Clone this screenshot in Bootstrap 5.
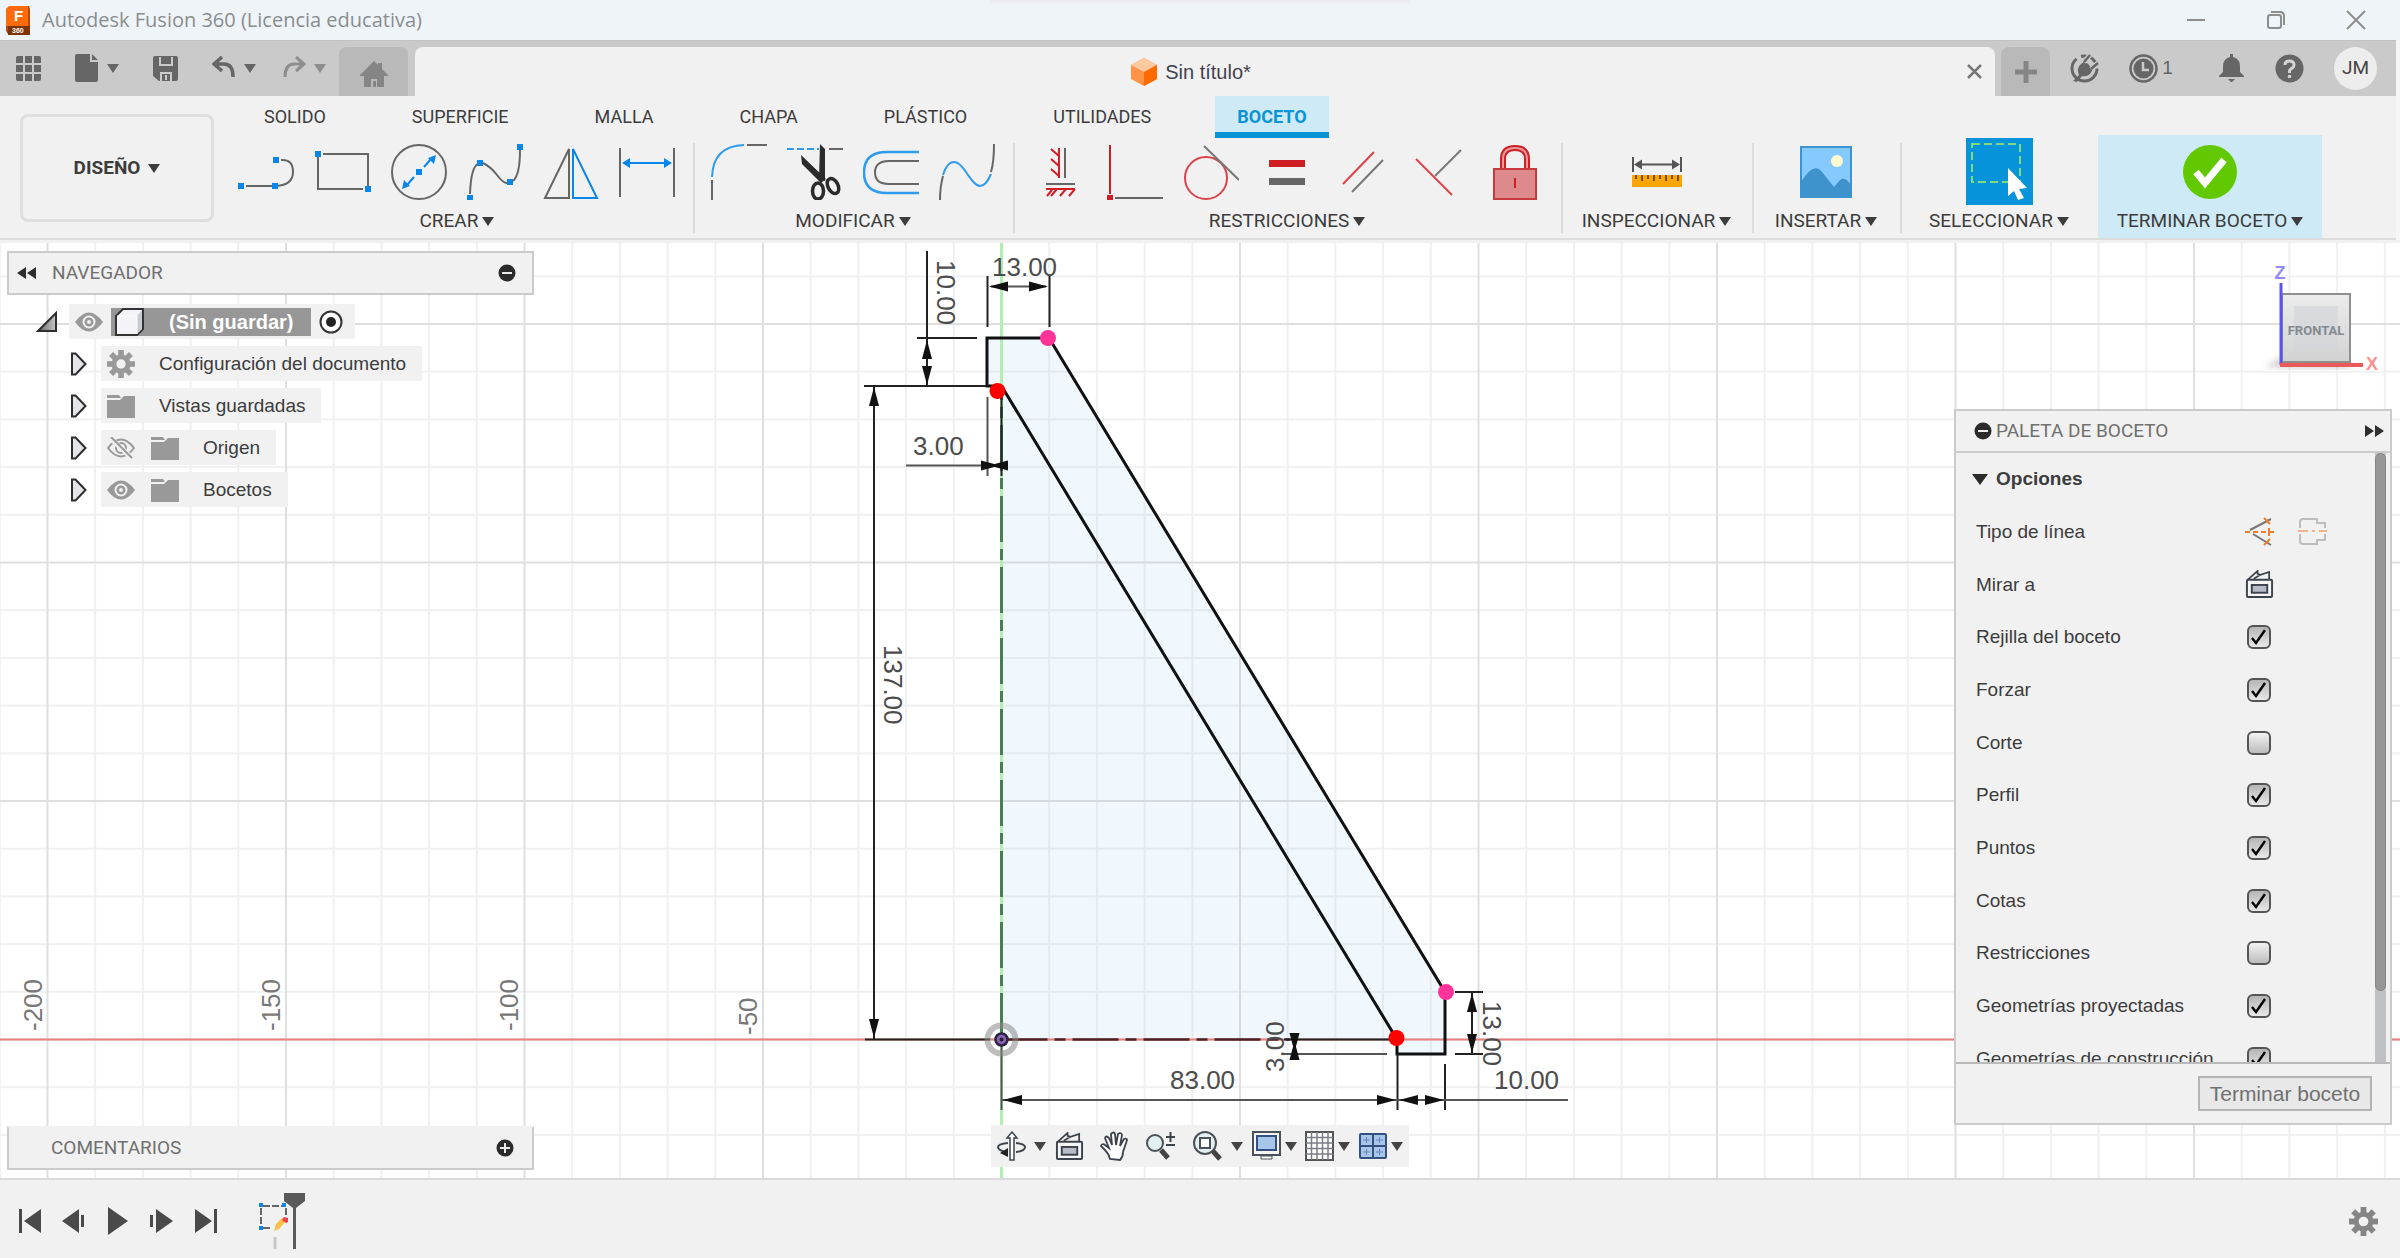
<!DOCTYPE html>
<html lang="es">
<head>
<meta charset="utf-8">
<meta name="viewport" content="width=device-width, initial-scale=1">
<title>Autodesk Fusion 360 (Licencia educativa)</title>
<link href="https://cdn.jsdelivr.net/npm/bootstrap@5.3.0/dist/css/bootstrap.min.css" rel="stylesheet">
<style>
:root{--ui:#f1f1f1;--ink:#3c3c3c;--icon:#666}
body{font-family:"Liberation Sans",Arial,sans-serif;font-size:19px;line-height:24px;color:var(--ink);background:#f6f6f6}
button{border:0;background:none;padding:0;color:inherit;font:inherit}
svg{display:block;flex:none}
.caret{display:inline-block;flex:none;border:6px solid transparent;border-top:9px solid currentColor;border-bottom:0}
.titlebar{height:40px;background:linear-gradient(#e9ebf0,#f0f2f7) center top/420px 5px no-repeat,#eff4f8;color:#8a8d90;font-family:"Open Sans","Noto Sans",sans-serif;font-size:20px;padding:0 34px 0 5px}
.titlebar .brand{gap:12px}
.win-ctl{gap:60px}
.appbar{height:56px;background:#cacaca;margin-right:4px;color:var(--icon);padding-top:6px;border-top:1px solid #c2c2c2}
.qat{width:339px;height:42px;padding:0 13px 0 16px}
.home-tab{width:69px;height:49px;background:#b9b9b9;border-radius:7px 7px 0 0;margin-right:7px;color:#858585;padding-top:5px}
.doc-tab{background:var(--ui);height:49px;border-radius:8px 8px 0 0;font-size:20px;padding-right:13px;margin-right:6px;color:#434350}
.add-tab{width:49px;height:49px;background:#b9b9b9;border-radius:8px 8px 0 0;color:#858585}
.status{width:346px;height:42px;padding:0 19px 0 20px}
.avatar{width:43px;height:43px;border-radius:50%;background:#ededed;color:#444;font-family:Roboto,sans-serif;font-size:19px}
.ribbon{background:var(--ui);border-bottom:2px solid #dcdcdc;height:144px;font-family:Roboto,sans-serif;margin-right:4px}
.workspace-btn{width:194px;height:108px;border:3px solid #dfdfdf;border-radius:8px;margin:18px 7px 0 20px;font-weight:700}
.rib-tabs{height:39px;gap:42px;padding-left:21px;font-size:18px}
.rib-tabs button{height:42px;padding:0 22px;border-bottom:6px solid transparent;padding-top:5px;line-height:24px}
.rib-tabs button.active{background:#cdeaf6;border-color:#0a94d6;color:#0a94d6;font-weight:700}
.rib-group{padding:3px 18px 0;position:relative;height:103px}
.rib-group .tools{height:67px;gap:20px;margin-bottom:4px}
.rib-group .tools>button{width:56px;height:56px;display:flex;align-items:center;justify-content:center}
.rib-group + .rib-group:not(.finish)::before{content:"";position:absolute;left:0;top:8px;height:90px;width:2px;background:#dcdcdc}
.g-inspect{width:191px}.g-insert{width:148px}.g-select{width:198px}
.finish{width:224px;background:#cdeaf6}
.stage{background:#fff;border-top:3px solid var(--ui);min-height:0}
.drawing{position:absolute;inset:0;width:100%;height:100%}
.panel-bar{width:527px;height:44px;background:var(--ui);border:2px solid #cbcbcb;color:#707070;font-family:Roboto,sans-serif}
.browser{padding:8px 0 0 7px}
.tree{margin:9px 0 0 29px}
.tree .node{height:35px;margin-bottom:7px}
.tree .kids{margin-left:34px}
.tree .kids .node{gap:14px}
.chip{background:var(--ui);height:35px;padding:0 16px 0 6px}
.root-name{background:#979797;height:28px;width:200px;color:#fff;font-size:20px;font-weight:700;padding-left:4px;gap:25px}
.palette{width:438px;background:var(--ui);border:2px solid #cbcbcb;margin-right:8px}
.palette-head{height:42px;border-bottom:2px solid #cbcbcb;padding:0 6px 0 18px;color:#707070;font-family:Roboto,sans-serif}
.palette-body{height:609px;overflow:hidden}
.opts{display:grid;grid-auto-rows:1fr;height:632px;margin:0}
.opts>*{display:flex;align-items:center;padding-left:20px}
.opts .opt-label{width:269px}
.opts input{appearance:none;width:24px;height:24px;margin:0 0 0 2px;border:2px solid #555;border-radius:6px;background:linear-gradient(#f3f3f3,#bcbcbc)}
.opts input:checked{background:url("data:image/svg+xml,%3Csvg xmlns='http://www.w3.org/2000/svg' viewBox='0 0 20 20'%3E%3Cpath d='M3 11l4 5L16 3' fill='none' stroke='%23000' stroke-width='2.4'/%3E%3C/svg%3E"),linear-gradient(#b5b5b5,#e8e8e8)}
.track{width:11px;background:#bfc1c4;margin-right:4px}
.thumb{height:538px;background:#979797;border:1px solid #858585;border-radius:6px}
.palette-foot{height:61px;border-top:2px solid #b9b9b9;padding:0 18px 0 0}
.finish-btn{width:174px;height:35px;border:2px solid #b4b4b4;background:#e8e8e8;font-size:21px;color:#707070}
.bottom-row{display:grid;grid-template-columns:1fr auto 1fr;height:53px}
.navtools{height:42px;width:418px;background:rgba(240,240,240,.96);padding:0 6px 0 6px;color:#444}
.comments{border-top-color:var(--ui);padding:0 18px 0 42px;margin:1px 0 0 7px}
.timeline{height:80px;background:var(--ui);border-top:2px solid #dadada;color:#4a4a4a;padding:4px 22px 0 18px}
.dimtxt{font:26px "Liberation Sans",Arial,sans-serif;fill:#4c4c4c}
</style>
<script src="https://cdn.jsdelivr.net/npm/bootstrap@5.3.0/dist/js/bootstrap.bundle.min.js"></script>
</head>
<body class="d-flex flex-column vh-100 overflow-hidden">
<svg width="0" height="0" class="position-absolute" aria-hidden="true">
  <symbol id="eye" viewBox="0 0 28 20"><path d="M0 10Q14-9 28 10Q14 29 0 10z" fill="#999"/><circle cx="14" cy="10" r="5.5" fill="none" stroke="#f1f1f1" stroke-width="2"/><circle cx="14" cy="10" r="2" fill="#f1f1f1"/></symbol>
  <symbol id="folder" viewBox="0 0 28 24"><path d="M0 1h12l2 3H0zM0 6h13l4-4h11v22H0z" fill="#999"/></symbol>
  <symbol id="arrow" viewBox="0 0 17 24"><path d="M2 1.500h3.500L15.500 12 5.500 22.500H2z" fill="#e4e4ea" stroke="#2e2e2e" stroke-width="2"/></symbol>
  <symbol id="gear" viewBox="-14 -14 28 28"><g fill="currentColor"><circle r="9.500"/><g id="t"><rect x="-2.800" y="-14" width="5.600" height="28"/><rect x="-14" y="-2.800" width="28" height="5.600"/></g><use href="#t" transform="rotate(45)"/></g><circle r="4.700" fill="#f1f1f1"/></symbol>
  <symbol id="lookat" viewBox="0 0 30 30"><path d="M3 10l10-9v3l3 1 9-3v8M9 9l7-4" fill="none" stroke="#3d434c" stroke-width="1.800"/><rect x="2" y="10" width="26" height="18" rx="1" fill="#f6f6f6" stroke="#3d434c" stroke-width="2"/><rect x="7" y="15.500" width="16" height="8" fill="#b9bcc6" stroke="#3d434c" stroke-width="2"/></symbol>
</svg>

<header class="titlebar d-flex align-items-center justify-content-between">
  <div class="brand d-flex align-items-center">
    <svg width="25" height="29" viewBox="0 0 25 29"><path d="M1 3l4-3h19l1 3v25H3l-2-3z" fill="#b24a10"/><path d="M1 3l3-3h19v20H1z" fill="#ff6b0b"/><path d="M3 20h22v9H3z" fill="#7e3205"/><text x="9" y="15" font-size="15" font-weight="700" fill="#fff" font-family="Liberation Sans">F</text><text x="7" y="27" font-size="7" font-weight="700" fill="#fff" font-family="Liberation Sans">360</text></svg>
    <span>Autodesk Fusion 360 (Licencia educativa)</span>
  </div>
  <div class="win-ctl d-flex align-items-center">
    <button aria-label="Minimizar"><svg width="20" height="20"><path d="M1 10h18" stroke="#8d8d8d" stroke-width="2"/></svg></button>
    <button aria-label="Restaurar"><svg width="20" height="20" fill="none" stroke="#8d8d8d" stroke-width="2"><rect x="2" y="5" width="13" height="13" rx="2"/><path d="M5 2h9q4 0 4 4v9"/></svg></button>
    <button aria-label="Cerrar"><svg width="20" height="20"><path d="M1 1l18 18M19 1L1 19" stroke="#8d8d8d" stroke-width="2"/></svg></button>
  </div>
</header>

<div class="appbar d-flex flex-none align-items-start">
  <div class="qat d-flex align-items-center justify-content-between">
    <button aria-label="Panel de datos"><svg width="25" height="25" fill="currentColor"><path d="M0 2q0-2 2-2h5v7H0zM9 0h7v7H9zM18 0h5q2 0 2 2v5h-7zM0 9h7v7H0zM9 9h7v7H9zM18 9h7v7h-7zM0 18h7v7H2q-2 0-2-2zM9 18h7v7H9zM18 18h7v5q0 2-2 2h-5z"/></svg></button>
    <button class="d-flex align-items-center ms-3" aria-label="Archivo"><svg width="24" height="28" fill="currentColor"><path d="M2 0h13v8h8v18q0 2-2 2H2q-2 0-2-2V2q0-2 2-2zM17 0l6 6h-6z"/></svg><span class="caret ms-2 me-3"></span></button>
    <button aria-label="Guardar"><svg width="25" height="25"><path d="M2 0h21q2 0 2 2v21q0 2-2 2H6l-6-5V2q0-2 2-2z" fill="currentColor"/><path d="M7 1v8h12V1M8 25v-8h10v8M13 19v5" fill="none" stroke="#cacaca" stroke-width="2"/></svg></button>
    <button class="d-flex align-items-center ms-3" aria-label="Deshacer"><svg width="24" height="24" fill="none" stroke="currentColor" stroke-width="3.500"><path d="M10 1L2 8l8 7M2 8h10q9 0 9 13"/></svg><span class="caret ms-2"></span></button>
    <button class="d-flex align-items-center ms-2" aria-label="Rehacer" style="color:#8e8e8e"><svg width="24" height="24" fill="none" stroke="currentColor" stroke-width="3"><path d="M14 1l8 7-8 7M22 8H12Q3 8 3 21"/></svg><span class="caret ms-2"></span></button>
  </div>
  <button class="home-tab d-flex align-items-center justify-content-center" aria-label="Inicio"><svg width="28" height="26" fill="currentColor"><path d="M14 0l4 4V2h4v6l6 6v1h-4v11h-7v-8h-6v8H4V15H0v-1zM13 20h3v6h-3z"/></svg></button>
  <div class="doc-tab flex-grow-1 d-flex align-items-center">
    <div class="flex-grow-1 d-flex align-items-center justify-content-center gap-2">
      <svg width="26" height="28"><path d="M13 0l13 7v14l-13 7L0 21V7z" fill="#ff9346"/><path d="M13 0l13 7-13 7L0 7z" fill="#ffc9a0"/><path d="M26 7v14l-13 7V14z" fill="#ff6a00"/></svg>
      <span>Sin título*</span>
    </div>
    <button aria-label="Cerrar documento"><svg width="15" height="15"><path d="M1 1l13 13M14 1L1 14" stroke="#777" stroke-width="2.500"/></svg></button>
  </div>
  <button class="add-tab d-flex align-items-center justify-content-center" aria-label="Nuevo diseño"><svg width="24" height="24"><path d="M12 1v22M1 12h22" stroke="currentColor" stroke-width="5"/></svg></button>
  <div class="status d-flex align-items-center justify-content-between">
    <button aria-label="Extensiones"><svg width="29" height="29"><circle cx="14.500" cy="14.500" r="12.500" fill="none" stroke="currentColor" stroke-width="3" stroke-dasharray="50 5 20 4"/><path d="M3 27l6-6q-3-7 2-11l4-3 8 8-3 5q-4 3-8 2l-5 6z" fill="currentColor"/><path d="M14 8l6-7M21 15l7-6" stroke="#cacaca" stroke-width="5"/><path d="M14 8l6-7M21 15l7-6" stroke="currentColor" stroke-width="2.500"/></svg></button>
    <button class="d-flex align-items-center gap-1 ms-2" aria-label="Estado de trabajos 1"><svg width="29" height="29"><circle cx="14.500" cy="14.500" r="13" fill="none" stroke="currentColor" stroke-width="2.500"/><circle cx="14.500" cy="14.500" r="10" fill="currentColor"/><path d="M14 8v8h6" fill="none" stroke="#cacaca" stroke-width="2.500"/></svg><span>1</span></button>
    <button class="ms-4" aria-label="Notificaciones"><svg width="25" height="28" fill="currentColor"><path d="M11 0h3v3q7 2 7 9v6l4 4v1H0v-1l4-4v-6q0-7 7-9zM9 25h7l-3 3h-1z"/></svg></button>
    <button class="ms-2" aria-label="Ayuda"><svg width="29" height="29"><circle cx="14.500" cy="14.500" r="14" fill="currentColor"/><path d="M10 11q0-4 4.500-4t4.500 4q0 2-2.500 3.500T14.500 18v1" fill="none" stroke="#d4d4d4" stroke-width="3"/><circle cx="14.500" cy="22.500" r="1.800" fill="#d4d4d4"/></svg></button>
    <button class="avatar ms-2">JM</button>
  </div>
</div>

<div class="ribbon d-flex flex-none">
  <button class="workspace-btn d-flex align-items-center justify-content-center gap-2">DISEÑO <span class="caret"></span></button>
  <div class="flex-grow-1">
    <nav class="rib-tabs d-flex align-items-start"><button>SOLIDO</button><button>SUPERFICIE</button><button>MALLA</button><button>CHAPA</button><button>PLÁSTICO</button><button>UTILIDADES</button><button class="active">BOCETO</button></nav>
    <div class="d-flex">
      <section class="rib-group">
        <div class="tools d-flex align-items-center">
          <button aria-label="Línea"><svg width="58" height="56" fill="none" stroke="#666" stroke-width="2"><path d="M8 42h26M38 42q17-1 17-14T43 16"/><path d="M0 39h6v6H0zM34 39h6v6h-6zM35 13h6v6h-6z" fill="#0a86e8" stroke="none"/></svg></button>
          <button aria-label="Rectángulo"><svg width="56" height="56" fill="none" stroke="#666" stroke-width="2"><path d="M8 10h45v33M48 45H3V13"/><path d="M0 7h6v6H0zM50 42h6v6h-6z" fill="#0a86e8" stroke="none"/></svg></button>
          <button aria-label="Círculo"><svg width="56" height="56"><circle cx="28" cy="28" r="27" fill="none" stroke="#666" stroke-width="2"/><path d="M33 23l7-8M23 33l-7 8" stroke="#0a86e8" stroke-width="2"/><path d="M25 25h6v6h-6zM45 11l-2 9-6-6zM11 45l2-9 6 6z" fill="#0a86e8"/></svg></button>
          <button aria-label="Spline"><svg width="56" height="56" fill="none" stroke="#666" stroke-width="2"><path d="M3 50Q4 23 11 20M16 19q8 4 14 12t10 8M46 37q7-6 7-31"/><path d="M0 51h6v6H0zM10 16h6v6h-6zM40 35h6v6h-6zM50 0h6v6h-6z" fill="#0a86e8" stroke="none"/></svg></button>
          <button aria-label="Simetría"><svg width="56" height="56" fill="none" stroke-width="2"><path d="M26 5v49H2z" stroke="#666"/><path d="M30 5v49h24z" stroke="#0a86e8"/></svg></button>
          <button aria-label="Cota"><svg width="56" height="56"><path d="M1 4v49M55 4v49" stroke="#666" stroke-width="2"/><path d="M6 19h44" stroke="#0a86e8" stroke-width="2"/><path d="M3 19l8-5v10zM53 19l-8-5v10z" fill="#0a86e8"/></svg></button>
        </div>
        <button class="d-flex w-100 align-items-center justify-content-center gap-1">CREAR <span class="caret"></span></button>
      </section>
      <section class="rib-group">
        <div class="tools d-flex align-items-center">
          <button aria-label="Empalme"><svg width="56" height="56" fill="none" stroke-width="2"><path d="M36 1h20M1 56V36" stroke="#666"/><path d="M1 33Q2 2 33 1" stroke="#2f9bea"/></svg></button>
          <button aria-label="Recortar"><svg width="56" height="56"><path d="M0 5h32" stroke="#2f9bea" stroke-width="2" stroke-dasharray="7 3"/><path d="M42 5h14" stroke="#666" stroke-width="2"/><path d="M33 0l5 5v32l-6-2zM14 11l25 24-5 4-19-19z" fill="#2b2b2b"/><ellipse cx="31" cy="47" rx="5.500" ry="8" fill="none" stroke="#2b2b2b" stroke-width="3.500"/><ellipse cx="46" cy="42" rx="5" ry="8" transform="rotate(-28 46 42)" fill="none" stroke="#2b2b2b" stroke-width="3.500"/></svg></button>
          <button aria-label="Desfase"><svg width="56" height="56" fill="none"><path d="M56 8H24Q1 8 1 28.500T24 49h32" stroke="#2f9bea" stroke-width="2.500"/><path d="M56 17H26Q12 17 12 28.500T26 40h30" stroke="#666" stroke-width="2"/></svg></button>
          <button aria-label="Curva"><svg width="56" height="56" fill="none" stroke-width="2"><path d="M1 56q0-13 3-24M52 28q3-10 3-28" stroke="#666"/><path d="M4 31q4-13 11-13c10 0 17 24 26 24q6 0 11-12" stroke="#2f9bea"/></svg></button>
        </div>
        <button class="d-flex w-100 align-items-center justify-content-center gap-1">MODIFICAR <span class="caret"></span></button>
      </section>
      <section class="rib-group">
        <div class="tools d-flex align-items-center">
          <button aria-label="Horizontal/Vertical"><svg width="56" height="56" fill="none" stroke="#cf1f25" stroke-width="2"><path d="M28 4v30M28 12l-8-7M28 22l-8-7M28 32l-8-7M15 45h29M20 52l6-7M29 52l6-7M38 52l6-7M16 52l5-6"/><path d="M34 4v30M15 40h29" stroke="#666"/></svg></button>
          <button aria-label="Coincidente"><svg width="56" height="56"><path d="M3 1v49" stroke="#cf1f25" stroke-width="2"/><path d="M8 54h48" stroke="#666" stroke-width="2"/><path d="M0 51h6v5H0z" fill="#cf1f25"/></svg></button>
          <button aria-label="Tangente"><svg width="56" height="56" fill="none" stroke-width="2"><circle cx="23" cy="34" r="21" stroke="#d9444a"/><path d="M21 2l35 34" stroke="#777"/></svg></button>
          <button aria-label="Igual"><svg width="56" height="56"><path d="M10 16h36v7H10z" fill="#cf1f25"/><path d="M10 34h36v7H10z" fill="#666"/></svg></button>
          <button aria-label="Paralela"><svg width="56" height="56" stroke-width="2"><path d="M8 40L39 8" stroke="#d9444a"/><path d="M17 48l31-32" stroke="#777"/></svg></button>
          <button aria-label="Perpendicular"><svg width="56" height="56" stroke-width="2"><path d="M5 15l36 36" stroke="#d9444a"/><path d="M24 32L50 6" stroke="#777"/></svg></button>
          <button aria-label="Fijar"><svg width="56" height="56"><path d="M16 25V15q0-11 12-11t12 11v10" fill="none" stroke="#cf1f25" stroke-width="6"/><path d="M16 25V15q0-11 12-11t12 11v10" fill="none" stroke="#e39a9a" stroke-width="2"/><rect x="7" y="25" width="42" height="30" fill="#de8a8c" stroke="#c8383c" stroke-width="2"/><path d="M28 34v10" stroke="#cf1f25" stroke-width="2"/></svg></button>
        </div>
        <button class="d-flex w-100 align-items-center justify-content-center gap-1">RESTRICCIONES <span class="caret"></span></button>
      </section>
      <section class="rib-group g-inspect px-0">
        <div class="tools d-flex align-items-center justify-content-center"><button aria-label="Medir"><svg width="50" height="30"><path d="M1 0v15M49 0v15M4 7.500h42" stroke="#555" stroke-width="2"/><path d="M2 7.500l8-5v10zM48 7.500l-8-5v10z" fill="#555"/><path d="M0 18h50v12H0z" fill="#f9a60a"/><path d="M4 18v4M10 18v6M16 18v4M22 18v6M28 18v4M34 18v6M40 18v4M46 18v6" stroke="#7b5300" stroke-width="2"/></svg></button></div>
        <button class="d-flex w-100 align-items-center justify-content-center gap-1">INSPECCIONAR <span class="caret"></span></button>
      </section>
      <section class="rib-group g-insert px-0">
        <div class="tools d-flex align-items-center justify-content-center"><button aria-label="Insertar imagen"><svg width="52" height="52"><rect x="1" y="1" width="50" height="50" fill="#84caff" stroke="#3e93cc" stroke-width="2"/><circle cx="37" cy="15" r="6" fill="#fffbd1"/><path d="M1 36q13-21 21-10l12 15 6-7q5-4 11 5v12H1z" fill="#3e93cc"/></svg></button></div>
        <button class="d-flex w-100 align-items-center justify-content-center gap-1">INSERTAR <span class="caret"></span></button>
      </section>
      <section class="rib-group g-select px-0">
        <div class="tools d-flex align-items-center justify-content-center"><button aria-label="Seleccionar"><svg width="67" height="67"><path d="M0 0h67v67H0z" fill="#0793d9"/><path d="M6 6h48v38H6z" fill="none" stroke="#7edc7e" stroke-width="2" stroke-dasharray="8 4"/><path d="M42 30l19 20-8 1 5 9-6 2-4-9-6 5z" fill="#fff"/></svg></button></div>
        <button class="d-flex w-100 align-items-center justify-content-center gap-1">SELECCIONAR <span class="caret"></span></button>
      </section>
      <section class="rib-group finish px-0">
        <div class="tools d-flex align-items-center justify-content-center"><button aria-label="Terminar"><svg width="56" height="56"><circle cx="28" cy="28" r="27" fill="#62c900"/><path d="M14 28l9 11 19-23" fill="none" stroke="#fff" stroke-width="7"/></svg></button></div>
        <button class="d-flex w-100 align-items-center justify-content-center gap-1">TERMINAR BOCETO <span class="caret"></span></button>
      </section>
    </div>
  </div>
</div>

<main class="stage flex-grow-1 position-relative d-flex flex-column">
  <svg class="drawing" viewBox="0 243 2400 935" preserveAspectRatio="xMidYMid slice">
    <defs>
      <pattern id="minor" x="1001.500" y="1039.500" width="47.700" height="47.700" patternUnits="userSpaceOnUse"><path d="M0 0V47.700M47.700 0V47.700M0 0H47.700M0 47.700H47.700" stroke="#999" stroke-opacity=".14" stroke-width="2" fill="none"/></pattern>
      <pattern id="major" x="1001.500" y="1039.500" width="238.500" height="238.500" patternUnits="userSpaceOnUse"><path d="M0 0V238.500M238.500 0V238.500M0 0H238.500M0 238.500H238.500" stroke="#888" stroke-opacity=".16" stroke-width="2" fill="none"/></pattern>
      <path id="tip" d="M0 0l19-5v10z"/>
    </defs>
    <path d="M987 338H1049L1445 992V1054H1397V1039.500H1001.500V386H987z" fill="#f0f8fe"/>
    <path d="M0 243h2400v935H0z" fill="url(#minor)"/>
    <path d="M0 243h2400v935H0z" fill="url(#major)"/>
    <path d="M1001.500 243V1178" stroke="#b2eeb2" stroke-width="3"/>
    <path d="M0 1039.500H2400" stroke="#e8807f" stroke-width="2"/>
    <path d="M1001.500 1039V396" stroke="#487f52" stroke-width="3" stroke-dasharray="46 7 11 7" />
    <path d="M1001.500 1039.500H1290" stroke="#4c2224" stroke-width="2.500" stroke-dasharray="46 7 11 7"/>
    <g fill="none" stroke="#111" stroke-width="3">
      <path d="M1001.500 386H987V338H1049L1445 992V1054H1397V1039.500L1001.500 386"/>
    </g>
    <g fill="none" stroke="#222" stroke-width="2">
      <path d="M987.500 276V327M1049.500 276V327M927 251V386M917 338H977M864 386H987M874 387V1039M865 1039.500H990M1284 1039.500H1390M1397.500 1054V1110M1445 1064V1110M1455 992H1483M1455 1054H1483M1472 993V1053M1001.500 396V476M1294.500 1033V1060"/>
      <path d="M991 286.500H1046M906 465.500H1000M987.500 397V476M1001.500 1046V1110M1002 1100H1568M1283 1054H1387" stroke="#555"/>
    </g>
    <g fill="#111">
      <use href="#tip" x="989" y="286.500"/><use href="#tip" transform="translate(1048 286.500) rotate(180)"/>
      <use href="#tip" transform="translate(927 340) rotate(90)"/><use href="#tip" transform="translate(927 385) rotate(-90)"/>
      <use href="#tip" transform="translate(874 387) rotate(90)"/><use href="#tip" transform="translate(874 1038) rotate(-90)"/>
      <use href="#tip" transform="translate(1000 465.500) rotate(180)"/><use href="#tip" x="989" y="465.500"/>
      <use href="#tip" x="1003" y="1100"/><use href="#tip" transform="translate(1396 1100) rotate(180)"/>
      <use href="#tip" x="1399" y="1100"/><use href="#tip" transform="translate(1444 1100) rotate(180)"/>
      <use href="#tip" transform="translate(1472 993) rotate(90)"/><use href="#tip" transform="translate(1472 1053) rotate(-90)"/>
      <use href="#tip" transform="translate(1294.500 1052) rotate(-90)"/><use href="#tip" transform="translate(1294.500 1041) rotate(90)"/>
    </g>
    <g class="dimtxt">
      <text x="992" y="276">13.00</text><text x="913" y="455">3.00</text><text x="1170" y="1089">83.00</text><text x="1494" y="1089">10.00</text>
      <text transform="translate(937 260) rotate(90)">10.00</text><text transform="translate(884 645) rotate(90)">137.00</text>
      <text transform="translate(1483 1001) rotate(90)">13.00</text><text transform="translate(1284 1072) rotate(-90)">3.00</text>
      <g fill="#777"><text transform="translate(42 1031) rotate(-90)">-200</text><text transform="translate(280 1031) rotate(-90)">-150</text><text transform="translate(518 1031) rotate(-90)">-100</text><text transform="translate(757 1035) rotate(-90)">-50</text></g>
    </g>
    <circle cx="1001.500" cy="1039.500" r="14" fill="none" stroke="#888" stroke-opacity=".55" stroke-width="6"/>
    <circle cx="1001.500" cy="1039.500" r="6" fill="#8a63b8" stroke="#2b2340" stroke-width="2.500"/><circle cx="1001.500" cy="1039.500" r="2" fill="#222"/>
    <g fill="red"><circle cx="997.500" cy="391" r="8"/><circle cx="1396.500" cy="1038" r="8"/></g>
    <g fill="#ff3399"><circle cx="1048" cy="338" r="8"/><circle cx="1446" cy="992" r="8"/></g>
  </svg>

  <div class="position-relative flex-grow-1 d-flex justify-content-between">
    <aside class="browser">
      <div class="panel-bar d-flex align-items-center ps-2">
        <button aria-label="Contraer"><svg width="19" height="12" fill="#2e2e2e"><path d="M0 6l9-6v12zM10 6l9-6v12z"/></svg></button>
        <span class="ms-3 flex-grow-1">NAVEGADOR</span>
        <button class="me-3" aria-label="Minimizar panel"><svg width="18" height="18"><circle cx="9" cy="9" r="8.500" fill="#2b2b2b"/><path d="M4 9h10" stroke="#eee" stroke-width="2"/></svg></button>
      </div>
      <div class="tree">
        <div class="node d-flex align-items-center">
          <svg width="21" height="21" class="me-2"><defs><linearGradient id="tg" x1="0" x2="1"><stop stop-color="#666"/><stop offset="1" stop-color="#c8c8c8"/></linearGradient></defs><path d="M20 2v18H2z" fill="url(#tg)" stroke="#2e2e2e" stroke-width="2"/></svg>
          <div class="chip d-flex align-items-center ms-1 pe-2">
            <svg width="28" height="20"><use href="#eye"/></svg>
            <div class="root-name d-flex align-items-center ms-2 me-2"><svg width="29" height="28"><path d="M1 8l7-7h20v20l-6 6H1z" fill="#f4f4f8" stroke="#333" stroke-width="2"/><path d="M22 8l5-6v19l-5 5z" fill="#c9cbd6"/><path d="M2 8h20v18" fill="none" stroke="#fff"/></svg><span>(Sin guardar)</span></div>
            <svg width="24" height="24" class="me-1"><circle cx="12" cy="12" r="10.500" fill="#fff" stroke="#333" stroke-width="2"/><circle cx="12" cy="12" r="5" fill="#222"/></svg>
          </div>
        </div>
        <div class="kids">
          <div class="node d-flex align-items-center"><svg width="17" height="24"><use href="#arrow"/></svg><div class="chip d-flex align-items-center"><svg width="28" height="28" color="#999" class="me-4"><use href="#gear"/></svg><span>Configuración del documento</span></div></div>
          <div class="node d-flex align-items-center"><svg width="17" height="24"><use href="#arrow"/></svg><div class="chip d-flex align-items-center"><svg width="28" height="24" class="me-4"><use href="#folder"/></svg><span>Vistas guardadas</span></div></div>
          <div class="node d-flex align-items-center"><svg width="17" height="24"><use href="#arrow"/></svg><div class="chip d-flex align-items-center"><svg width="28" height="22" class="me-3" fill="none" stroke="#999" stroke-width="2"><path d="M1 11Q14-6 27 11Q14 28 1 11z"/><circle cx="14" cy="11" r="5"/><path d="M3 1l22 20" stroke="#f1f1f1" stroke-width="5"/><path d="M4 0l21 21"/></svg><svg width="28" height="24" class="me-4"><use href="#folder"/></svg><span>Origen</span></div></div>
          <div class="node d-flex align-items-center"><svg width="17" height="24"><use href="#arrow"/></svg><div class="chip d-flex align-items-center"><svg width="28" height="20" class="me-3"><use href="#eye"/></svg><svg width="28" height="24" class="me-4"><use href="#folder"/></svg><span>Bocetos</span></div></div>
        </div>
      </div>
    </aside>

    <div class="d-flex flex-column align-items-end">
      <svg width="160" height="166" viewBox="2240 243 160 166">
        <defs><linearGradient id="cube" x2="0" y2="1"><stop stop-color="#ececec"/><stop offset="1" stop-color="#d2d2d2"/></linearGradient><filter id="soft"><feGaussianBlur stdDeviation="3"/></filter></defs>
        <path d="M2264 367l20-10 66 5v6z" fill="#999" opacity=".5" filter="url(#soft)"/>
        <rect x="2282" y="294" width="68" height="68" fill="url(#cube)" stroke="#8f8f8f" stroke-width="2"/>
        <path d="M2294 306h44v44h-44z" fill="#d3d6dc" opacity=".7"/>
        <text x="2316" y="335" font-family="Roboto" font-weight="700" font-size="13" text-anchor="middle" fill="#858a90">FRONTAL</text>
        <path d="M2281 283v82" stroke="#5a57e8" stroke-width="3"/><path d="M2280 365h83" stroke="#ea5a5a" stroke-width="4"/>
        <text x="2280" y="279" font-family="Liberation Sans" font-weight="700" font-size="18" text-anchor="middle" fill="#8f8cff">Z</text>
        <text x="2372" y="370" font-family="Liberation Sans" font-weight="700" font-size="18" text-anchor="middle" fill="#ff8f8f">X</text>
      </svg>
      <section class="palette">
        <div class="palette-head d-flex align-items-center">
          <button aria-label="Minimizar paleta"><svg width="18" height="18"><circle cx="9" cy="9" r="8.500" fill="#2b2b2b"/><path d="M4 9h10" stroke="#eee" stroke-width="2"/></svg></button>
          <span class="ms-1 flex-grow-1">PALETA DE BOCETO</span>
          <button aria-label="Expandir"><svg width="19" height="12" fill="#2e2e2e"><path d="M9 6L0 0v12zM19 6l-9-6v12z"/></svg></button>
        </div>
        <div class="palette-body d-flex">
          <div class="opts flex-grow-1">
            <div class="fw-bold ps-3"><svg width="16" height="11" class="me-2"><path d="M0 0h16l-8 11z" fill="#2b2b2b"/></svg><span>Opciones</span></div>
            <div><span class="opt-label">Tipo de línea</span><button class="me-4" aria-label="Construcción"><svg width="29" height="29" fill="none" stroke="#777" stroke-width="2"><path d="M5 13L26 2M8 17l18 11"/><path d="M0 15h29" stroke="#f07c2b" stroke-dasharray="5 3"/><path d="M24 11v8M19 1l6 6M19 28l6-6" stroke="#f07c2b"/></svg></button><button aria-label="Línea de eje"><svg width="29" height="29" fill="none" stroke="#bdbdbd" stroke-width="2"><path d="M2 11V5q0-3 3-3h14v4h8v5M2 17v7q0 3 3 3h14v-4h8v-6"/><path d="M0 14h29" stroke="#f4b48a" stroke-dasharray="10 4 3 4"/></svg></button></div>
            <div><span class="opt-label">Mirar a</span><button aria-label="Mirar a"><svg width="29" height="29"><use href="#lookat"/></svg></button></div>
            <div><label class="opt-label" for="o1">Rejilla del boceto</label><input type="checkbox" id="o1" checked></div>
            <div><label class="opt-label" for="o2">Forzar</label><input type="checkbox" id="o2" checked></div>
            <div><label class="opt-label" for="o3">Corte</label><input type="checkbox" id="o3"></div>
            <div><label class="opt-label" for="o4">Perfil</label><input type="checkbox" id="o4" checked></div>
            <div><label class="opt-label" for="o5">Puntos</label><input type="checkbox" id="o5" checked></div>
            <div><label class="opt-label" for="o6">Cotas</label><input type="checkbox" id="o6" checked></div>
            <div><label class="opt-label" for="o7">Restricciones</label><input type="checkbox" id="o7"></div>
            <div><label class="opt-label" for="o8">Geometrías proyectadas</label><input type="checkbox" id="o8" checked></div>
            <div><label class="opt-label" for="o9">Geometrías de construcción</label><input type="checkbox" id="o9" checked></div>
          </div>
          <div class="track"><div class="thumb"></div></div>
        </div>
        <div class="palette-foot d-flex align-items-center justify-content-end"><button class="finish-btn">Terminar boceto</button></div>
      </section>
    </div>
  </div>

  <div class="bottom-row position-relative">
    <div><div class="comments panel-bar d-flex align-items-center justify-content-between"><span>COMENTARIOS</span><button aria-label="Añadir comentario"><svg width="18" height="18"><circle cx="9" cy="9" r="8.500" fill="#2b2b2b"/><path d="M4 9h10M9 4v10" stroke="#eee" stroke-width="2"/></svg></button></div></div>
    <div class="navtools d-flex align-items-center justify-content-between">
      <button class="d-flex align-items-center gap-2" aria-label="Órbita"><svg width="29" height="30" fill="none" stroke="#3d434c" stroke-width="2"><path d="M13 29V7h-3l5-6 5 6h-3v22z" fill="#fff" stroke-width="1.500"/><path d="M11 12Q1 13 1 16q0 4 10 5M19 12q9 1 9 4 0 4-9 5"/><path d="M3 22l8-5v9z" fill="#222" stroke="none"/></svg><span class="caret"></span></button>
      <button aria-label="Mirar a"><svg width="29" height="29"><use href="#lookat"/></svg></button>
      <button class="ms-2" aria-label="Encuadre"><svg width="29" height="30"><path d="M10 28q-1-5-5-9l-4-4q1-3 4-1l4 3L5 7q1-3 4 0l3 7-1-11q3-3 4 0l1 11 2-11q3-2 4 1l-2 11 4-7q3-1 3 1l-4 12q0 5-3 8z" fill="#fff" stroke="#3d434c" stroke-width="1.800"/></svg></button>
      <button class="ms-2" aria-label="Zoom"><svg width="30" height="30"><circle cx="9" cy="12" r="8" fill="#e3f0f2" stroke="#4b5158" stroke-width="2"/><path d="M15 19l7 8" stroke="#444" stroke-width="5"/><path d="M20 6h9M24.500 1v10M20 14h9" stroke="#3d434c" stroke-width="2"/></svg></button>
      <button class="d-flex align-items-center gap-2 ms-2" aria-label="Ajustar"><svg width="30" height="30"><path d="M19 19l8 9" stroke="#444" stroke-width="5"/><circle cx="12" cy="12" r="11" fill="#e3f0f2" stroke="#4b5158" stroke-width="2"/><rect x="7" y="7" width="10" height="10" fill="#fff" stroke="#4b5158" stroke-width="2"/></svg><span class="caret"></span></button>
      <button class="d-flex align-items-center gap-1" aria-label="Visualización"><svg width="29" height="30"><path d="M9 25h11v3H9z" fill="#fff" stroke="#4b5158"/><rect x="1" y="1" width="27" height="23" fill="#f4f4f4" stroke="#4b5158" stroke-width="2"/><rect x="5" y="5" width="19" height="14" fill="#a8c6ea" stroke="#33507e" stroke-width="2"/></svg><span class="caret"></span></button>
      <button class="d-flex align-items-center gap-1" aria-label="Rejilla"><svg width="29" height="30"><rect x="1" y="1" width="27" height="28" fill="#fff" stroke="#555" stroke-width="2"/><path d="M6.500 1v28M12 1v28M17.500 1v28M23 1v28M1 6.500h27M1 12h27M1 17.500h27M1 23h27" stroke="#7b8088" stroke-width="1.500"/></svg><span class="caret"></span></button>
      <button class="d-flex align-items-center gap-1" aria-label="Vistas"><svg width="28" height="26"><rect width="28" height="26" rx="2" fill="#33507e"/><path d="M2 2h11v10H2zM15 2h11v10H15zM2 14h11v10H2zM15 14h11v10H15z" fill="#a8c6ea"/><path d="M7.500 4v6M4 7h7M20.500 4v6M17 7h7M7.500 16v6M4 19h7M20.500 16v6M17 19h7" stroke="#6388b8"/></svg><span class="caret"></span></button>
    </div>
    <div></div>
  </div>
</main>

<footer class="timeline d-flex flex-none align-items-center justify-content-between">
  <div class="d-flex align-items-center">
    <div class="d-flex align-items-center me-3" style="gap:20px">
      <button aria-label="Inicio"><svg width="24" height="26" fill="currentColor"><path d="M1 1h3v24H1zM23 1v24L6 13z"/></svg></button>
      <button aria-label="Atrás"><svg width="24" height="26" fill="currentColor"><path d="M17 1v24L0 13zM19 7h3v12h-3z"/></svg></button>
      <button aria-label="Reproducir"><svg width="24" height="28" fill="currentColor"><path d="M2 0v28l20-14z"/></svg></button>
      <button aria-label="Adelante"><svg width="24" height="26" fill="currentColor"><path d="M6 1v24l17-12zM0 7h3v12H0z"/></svg></button>
      <button aria-label="Fin"><svg width="24" height="26" fill="currentColor"><path d="M1 1v24l17-12zM20 1h3v24h-3z"/></svg></button>
    </div>
    <svg width="48" height="58" class="ms-4"><path d="M5 14h21M28 16v8M5 36h9M3 16v18" stroke="#666" stroke-width="2" stroke-dasharray="7 2"/><path d="M1 11h4v4H1zM24 11h4v4h-4zM1 34h4v4H1z" fill="#0a86e8"/><path d="M18 32l6-6 4 3-7 8-5 2z" fill="#fcbf4a"/><path d="M26 25l4 1v4l-2 1-4-3z" fill="#f23b4a"/><path d="M17 45v12" stroke="#c6c6c6" stroke-width="3"/><path d="M26 1h21v8l-9 7v41h-3V16l-9-7z" fill="#5a5a5a"/></svg>
  </div>
  <button aria-label="Ajustes" style="color:#858585"><svg width="29" height="29"><use href="#gear"/></svg></button>
</footer>
</body>
</html>
